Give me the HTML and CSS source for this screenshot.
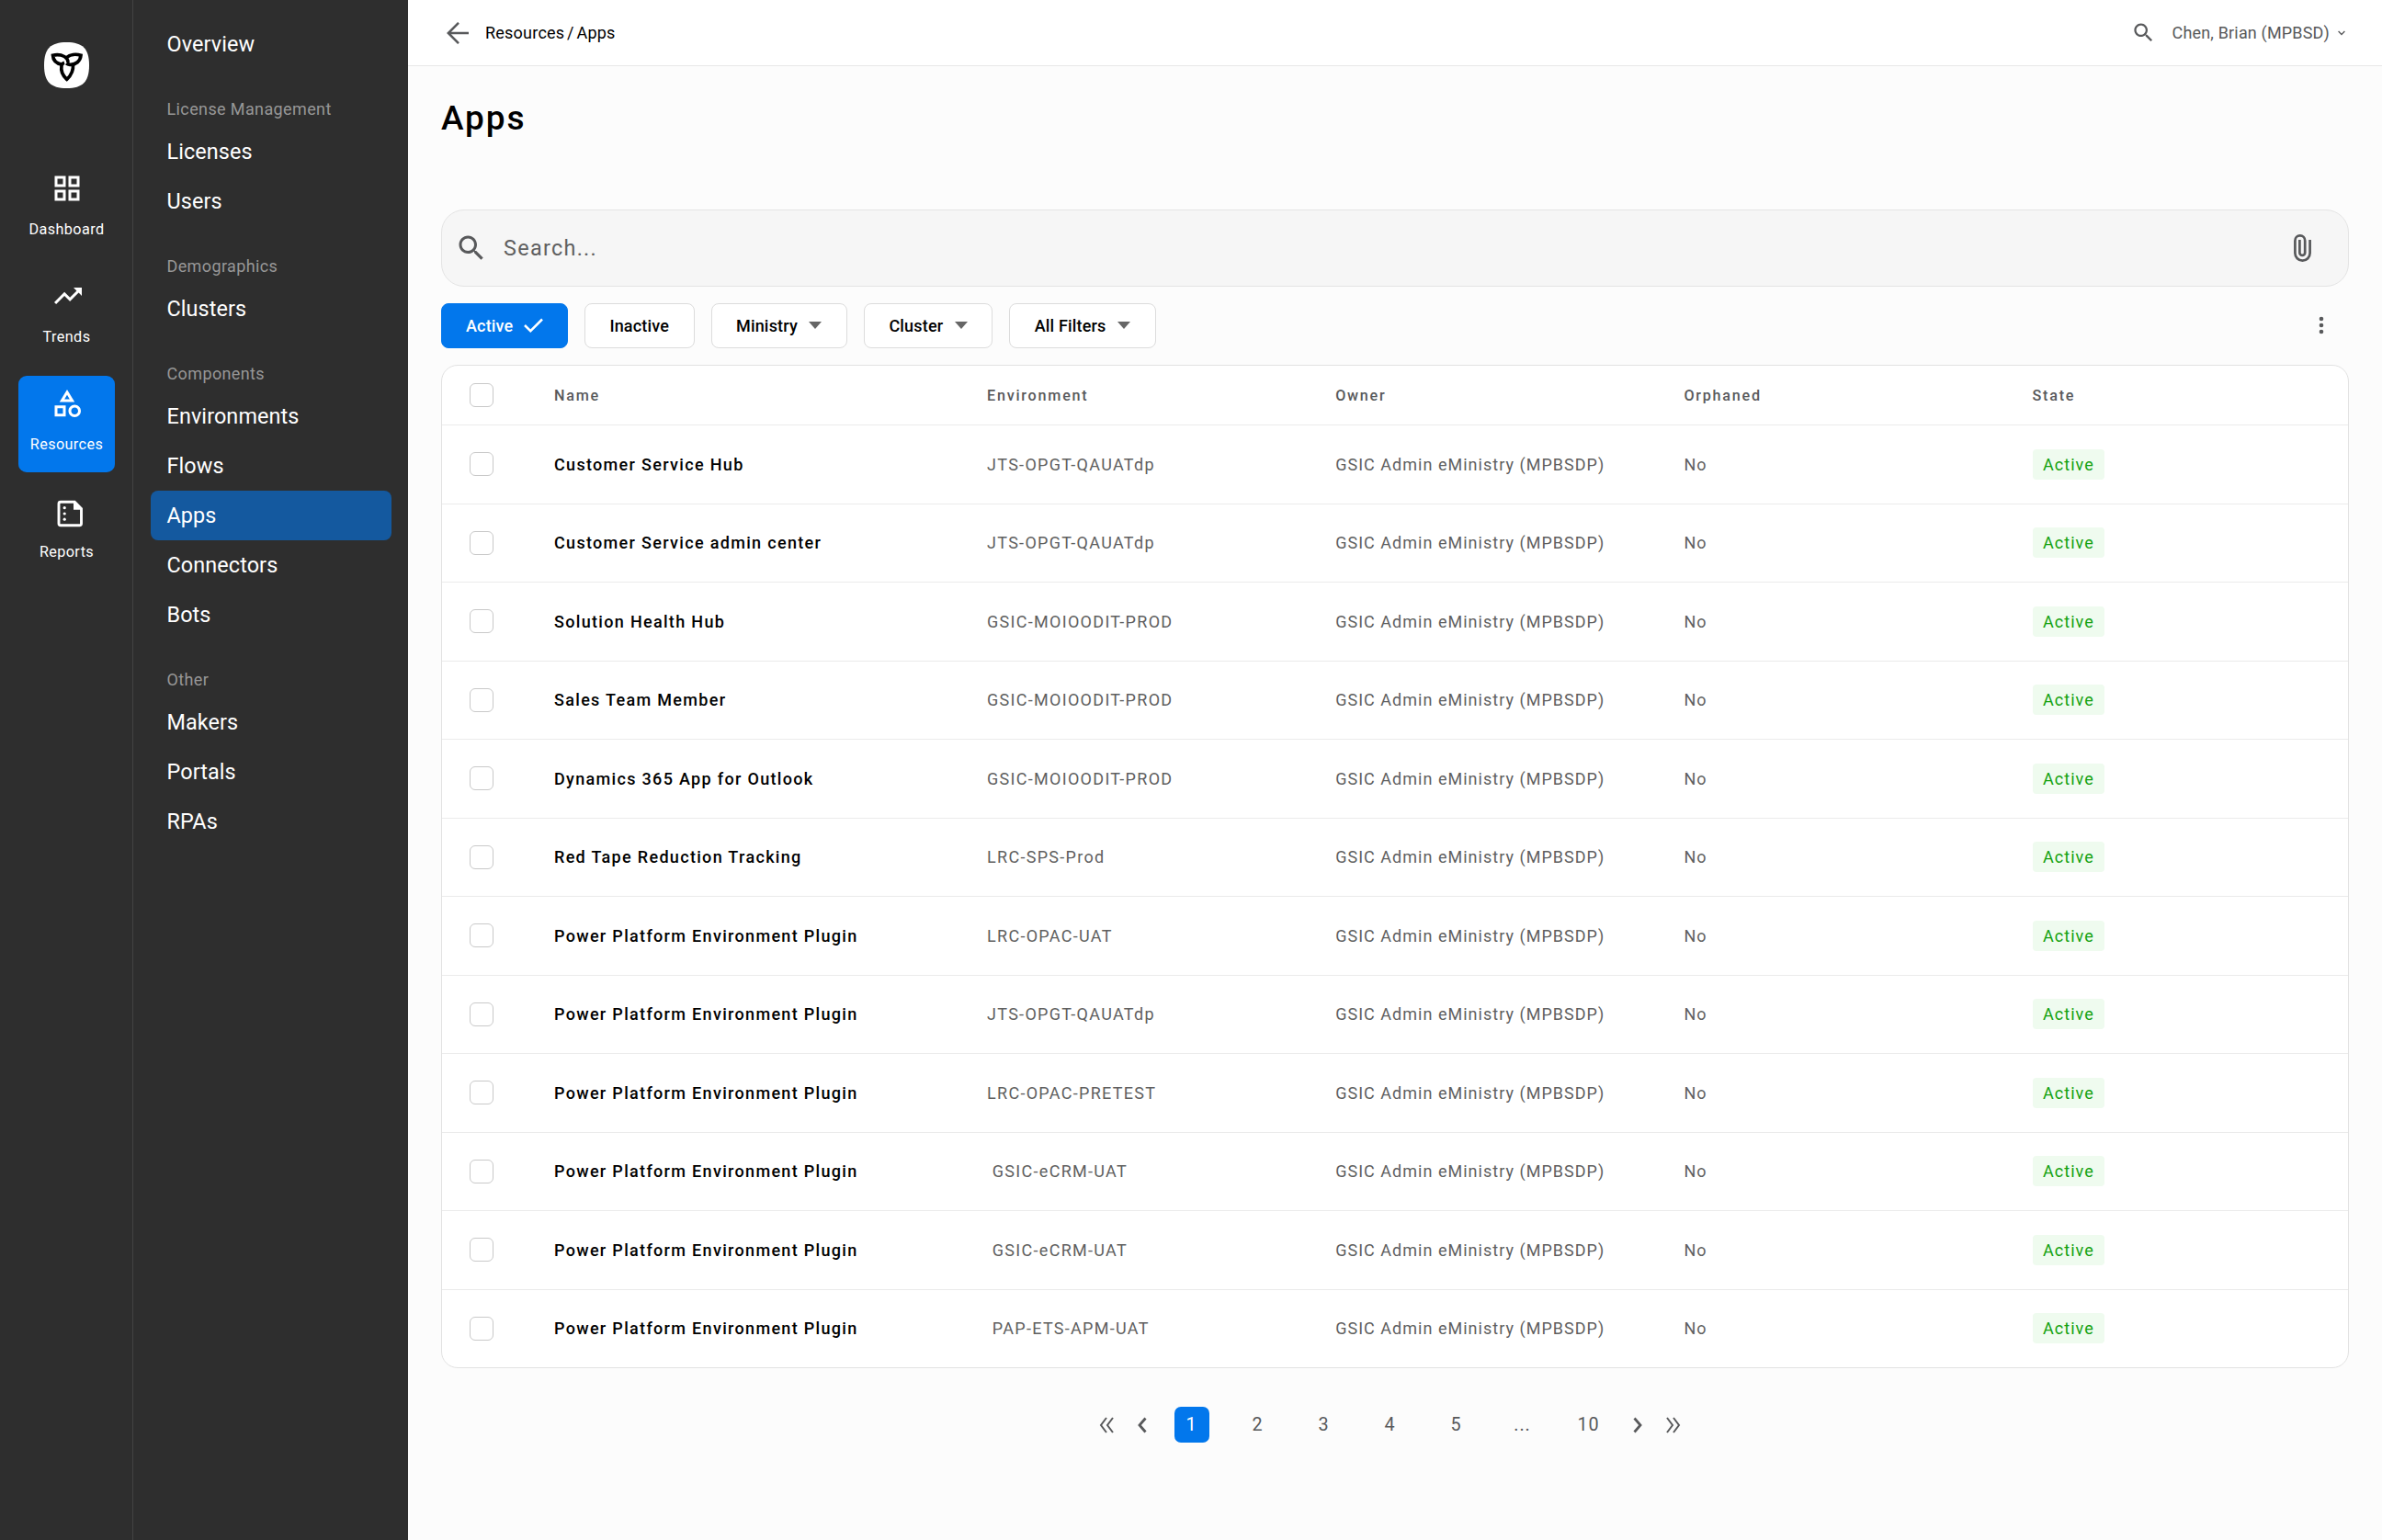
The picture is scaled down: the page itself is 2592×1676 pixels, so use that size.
FILE: index.html
```html
<!DOCTYPE html>
<html lang="en">
<head>
  <meta charset="UTF-8" />
  <title>Resources - Apps</title>
  <link rel="stylesheet" href="styles.css">
</head>
<body>

  <div class="layout">

    <!-- Main menu -->
    <aside class="rail">
      <svg class="logo" viewBox="0 0 49 50">
        <path d="M24.500 0C42 0 49 7 49 25S42 50 24.500 50 0 43 0 25 7 0 24.500 0z" fill="#fff"/>
        <g fill="none" stroke="#000" stroke-width="3.700">
          <path d="M19.500 24.300C13.500 23.300 9.800 19.500 9.500 14.200 15.500 12.600 22 14 25 18.300q1.600 2.400 .8 4.400"/>
          <path d="M24.500 16.500C28 13.300 34.500 12.600 40 14.200 39.500 20.500 34.500 24.700 28 24.300q-2.600-.2-3.800-1.300"/>
          <path d="M31.500 24C32 31 29 36.500 24.700 40.300 20.500 36.500 18 31 19 25.300q.6-2.300 3-3"/>
        </g>
      </svg>

      <a class="rail-item">
        <svg class="rail-icon" viewBox="0 0 24 24"><path d="M3 3v8h8V3H3zm6 6H5V5h4v4zm-6 4v8h8v-8H3zm6 6H5v-4h4v4zm4-16v8h8V3h-8zm6 6h-4V5h4v4zm-6 4v8h8v-8h-8zm6 6h-4v-4h4v4z"/></svg>
        <span>Dashboard</span>
      </a>
      <a class="rail-item">
        <svg class="rail-icon trends" viewBox="0 0 24 24"><path d="M16 6l2.290 2.290-4.880 4.880-4-4L2 16.590 3.410 18l6-6 4 4 6.300-6.290L22 12V6z"/></svg>
        <span>Trends</span>
      </a>
      <a class="rail-item active">
        <svg class="rail-icon" viewBox="0 0 24 24"><path d="M12 2l-5.500 9h11L12 2zm0 3.840L13.930 9h-3.870L12 5.840zM17.500 13c-2.490 0-4.500 2.010-4.500 4.500s2.010 4.500 4.500 4.500 4.500-2.010 4.500-4.500-2.010-4.500-4.500-4.500zm0 7c-1.380 0-2.500-1.120-2.500-2.500s1.120-2.500 2.500-2.500 2.500 1.120 2.500 2.500-1.120 2.500-2.500 2.500zM3 21.500h8v-8H3v8zm2-6h4v4H5v-4z"/></svg>
        <span>Resources</span>
      </a>
      <a class="rail-item">
        <svg class="rail-icon" viewBox="0 0 36 36">
          <path d="M11 8.300h15.200l7.300 7.200v16.300a2 2 0 0 1-2 2H11a2 2 0 0 1-2-2V10.300a2 2 0 0 1 2-2z" fill="none" stroke="#fff" stroke-width="2.900"/>
          <path d="M25 8v8.800h9V15l-7-7z"/>
          <circle cx="15.200" cy="14.700" r="1.600"/><circle cx="15.200" cy="21" r="1.600"/><circle cx="15.200" cy="27.200" r="1.600"/>
        </svg>
        <span>Reports</span>
      </a>
    </aside>

    <!-- Resources submenu -->
    <nav class="subnav">
      <a>Overview</a>
      <h4>License Management</h4>
      <a>Licenses</a>
      <a>Users</a>
      <h4>Demographics</h4>
      <a>Clusters</a>
      <h4>Components</h4>
      <a>Environments</a>
      <a>Flows</a>
      <a class="active">Apps</a>
      <a>Connectors</a>
      <a>Bots</a>
      <h4>Other</h4>
      <a>Makers</a>
      <a>Portals</a>
      <a>RPAs</a>
    </nav>

    <div class="main">
      <header class="topbar">
        <svg class="back line" viewBox="0 0 24 24"><path d="M24 12H1.800M13 .8L1.800 12 13 23.200"/></svg>
        <span class="breadcrumb">Resources / Apps</span>
        <svg class="top-search" viewBox="0 0 24 24"><path d="M15.500 14h-.79l-.28-.27C15.410 12.590 16 11.110 16 9.500 16 5.910 13.090 3 9.500 3S3 5.910 3 9.500 5.910 16 9.500 16c1.610 0 3.090-.59 4.230-1.570l.27.28v.79l5 4.990L20.490 19l-4.990-5zm-6 0C7.010 14 5 11.990 5 9.500S7.010 5 9.500 5 14 7.010 14 9.500 11.990 14 9.500 14z"/></svg>
        <span class="user">Chen, Brian (MPBSD)</span>
        <svg class="chevron line" viewBox="0 0 8 6"><path d="M.6 1L4 4.500 7.400 1"/></svg>
      </header>

      <div class="content">
        <h1>Apps</h1>

        <div class="search">
          <svg class="search-icon" viewBox="0 0 24 24"><path d="M15.500 14h-.79l-.28-.27C15.410 12.590 16 11.110 16 9.500 16 5.910 13.090 3 9.500 3S3 5.910 3 9.500 5.910 16 9.500 16c1.610 0 3.090-.59 4.230-1.570l.27.28v.79l5 4.990L20.490 19l-4.990-5zm-6 0C7.010 14 5 11.990 5 9.500S7.010 5 9.500 5 14 7.010 14 9.500 11.990 14 9.500 14z"/></svg>
          <span>Search...</span>
          <svg class="clip line" viewBox="0 0 19 30"><path d="M17.600 6v14.400a8.100 8.200 0 0 1-16.200 0V6.900a5.400 5.500 0 0 1 10.800 0v13a2.900 2.900 0 0 1-5.800 0V6"/></svg>
        </div>

        <div class="filters">
          <button class="chip active">Active
            <svg class="check line" viewBox="0 0 21 16"><path d="M1 8l6.300 6.200L20 1.500"/></svg>
          </button>
          <button class="chip">Inactive</button>
          <button class="chip">Ministry <i class="caret"></i></button>
          <button class="chip">Cluster <i class="caret"></i></button>
          <button class="chip">All Filters <i class="caret"></i></button>
          <svg class="more" viewBox="0 0 6 20"><circle cx="3" cy="3" r="2.300"/><circle cx="3" cy="10" r="2.300"/><circle cx="3" cy="17" r="2.300"/></svg>
        </div>

        <div class="card">
          <table>
            <thead>
              <tr>
                <th class="col-check"><span class="box"></span></th>
                <th class="col-name">Name</th>
                <th class="col">Environment</th>
                <th class="col">Owner</th>
                <th class="col">Orphaned</th>
                <th>State</th>
              </tr>
            </thead>
            <tbody id="appsTable"></tbody>
          </table>
        </div>

        <div class="pagination">
          <svg class="arrow line double" viewBox="0 0 16 18"><path d="M8 1L2 9l6 8M15 1L9 9l6 8"/></svg>
          <svg class="arrow line" viewBox="0 0 10 18"><path d="M8.500 1.500L2 9l6.500 7.500"/></svg>
          <div class="pages">
            <a class="active">1</a>
            <a>2</a>
            <a>3</a>
            <a>4</a>
            <a>5</a>
            <a>...</a>
            <a>10</a>
          </div>
          <svg class="arrow line" viewBox="0 0 10 18"><path d="M1.500 1.500L8 9l-6.500 7.500"/></svg>
          <svg class="arrow line double" viewBox="0 0 16 18"><path d="M1 1l6 8-6 8M8 1l6 8-6 8"/></svg>
        </div>
      </div>
    </div>
  </div>

  <script>
    const owner = "GSIC Admin eMinistry (MPBSDP)";
    const apps = [
      ["Customer Service Hub", "JTS-OPGT-QAUATdp"],
      ["Customer Service admin center", "JTS-OPGT-QAUATdp"],
      ["Solution Health Hub", "GSIC-MOIOODIT-PROD"],
      ["Sales Team Member", "GSIC-MOIOODIT-PROD"],
      ["Dynamics 365 App for Outlook", "GSIC-MOIOODIT-PROD"],
      ["Red Tape Reduction Tracking", "LRC-SPS-Prod"],
      ["Power Platform Environment Plugin", "LRC-OPAC-UAT"],
      ["Power Platform Environment Plugin", "JTS-OPGT-QAUATdp"],
      ["Power Platform Environment Plugin", "LRC-OPAC-PRETEST"],
      ["Power Platform Environment Plugin", "&nbsp;GSIC-eCRM-UAT"],
      ["Power Platform Environment Plugin", "&nbsp;GSIC-eCRM-UAT"],
      ["Power Platform Environment Plugin", "&nbsp;PAP-ETS-APM-UAT"]
    ];

    const tbody = document.getElementById("appsTable");
    apps.forEach(([name, env]) => {
      const row = document.createElement("tr");
      row.innerHTML = `
        <td><span class="box"></span></td>
        <td class="name">${name}</td>
        <td class="env">${env}</td>
        <td>${owner}</td>
        <td>No</td>
        <td><span class="badge">Active</span></td>
      `;
      tbody.appendChild(row);
    });
  </script>

</body>
</html>
```

FILE: styles.css
```css
* {
  box-sizing: border-box;
}

body {
  margin: 0;
  font-family: Roboto, "Liberation Sans", sans-serif;
  background: #fcfcfc;
  color: #000;
}

svg {
  display: block;
  flex: none;
  fill: #58595b;
}

svg.line {
  fill: none;
  stroke: #58595b;
}

.layout {
  display: flex;
  min-height: 1676px;
}

/* Left rail */
.rail {
  width: 145px;
  flex: none;
  padding: 46px 0 0 20px;
  background: #2e2e2e;
  border-right: 1px solid #434343;
}

.logo {
  width: 49px;
  height: 50px;
  margin: 0 0 79px 28px;
}

.rail-item {
  display: flex;
  flex-direction: column;
  align-items: center;
  width: 105px;
  height: 105px;
  margin-bottom: 12px;
  padding-top: 12px;
  border-radius: 9px;
  color: #fff;
  font-size: 16.200px;
  line-height: 20px;
  letter-spacing: 0.400px;
}

.rail-item.active {
  background: #0277ec;
}

.rail-icon {
  width: 36px;
  height: 36px;
  margin-bottom: 17px;
  fill: #fff;
}

.rail-icon.trends {
  margin-left: 3px;
}

/* Submenu */
.subnav {
  width: 299px;
  flex: none;
  padding: 21px 18px 0 18.500px;
  background: #2e2e2e;
}

.subnav a {
  display: block;
  height: 54px;
  padding-left: 18px;
  border-radius: 8px;
  color: #fff;
  font-size: 23.400px;
  line-height: 54px;
  letter-spacing: 0.100px;
}

.subnav a.active {
  background: #14599f;
}

.subnav h4 {
  margin: 25px 0 0 18px;
  height: 38px;
  color: #979797;
  font-size: 18px;
  font-weight: 400;
  line-height: 37px;
  letter-spacing: 0.380px;
}

/* Top bar */
.main {
  flex: 1;
}

.topbar {
  display: flex;
  align-items: center;
  height: 72px;
  padding: 0 40px 0 42px;
  background: #fff;
  border-bottom: 1px solid #e8e8e8;
  font-size: 18px;
}

.back {
  width: 24px;
  height: 24px;
  margin-right: 18px;
  stroke-width: 2.500;
}

.breadcrumb {
  letter-spacing: 0.230px;
  word-spacing: -2px;
}

.top-search {
  width: 27px;
  height: 27px;
  margin: 0 18px 0 auto;
}

.user {
  color: #58595b;
  letter-spacing: 0.170px;
}

.chevron {
  width: 8px;
  height: 6px;
  margin-left: 9px;
  stroke-width: 1.300;
}

.content {
  padding: 33px 36px 0;
}

h1 {
  margin: 0 0 75px;
  font-size: 37px;
  font-weight: 500;
  line-height: 48px;
  letter-spacing: 1.900px;
}

/* Search box */
.search {
  display: flex;
  align-items: center;
  height: 83.500px;
  padding: 0 40px 0 14px;
  background: #f6f6f6;
  border: 1px solid #e4e4e4;
  border-radius: 25px;
  color: #606060;
  font-size: 23.400px;
  letter-spacing: 1.300px;
}

.search-icon {
  width: 36px;
  height: 36px;
  margin-right: 17px;
}

.clip {
  width: 19px;
  height: 30px;
  margin-left: auto;
  stroke-width: 2.700;
}

/* Filter chips */
.filters {
  display: flex;
  align-items: center;
  gap: 18px;
  margin: 18px 0;
}

.chip {
  display: flex;
  align-items: center;
  height: 49.500px;
  padding: 0 26.500px;
  background: #fff;
  border: 1px solid #dcdcdc;
  border-radius: 8px;
  color: #000;
  font-family: inherit;
  font-size: 18px;
  font-weight: 500;
  letter-spacing: 0.170px;
}

.chip.active {
  padding: 0 26px;
  background: #0277ec;
  border-color: #0277ec;
  color: #fff;
}

.check {
  width: 21px;
  height: 16px;
  margin-left: 11.500px;
}

.check.line {
  stroke: #fff;
  stroke-width: 2.500;
}

.caret {
  margin-left: 12.500px;
  border: 7px solid transparent;
  border-top: 8px solid #666;
  border-bottom: 0;
}

.more {
  width: 6px;
  height: 20px;
  margin: 0 27px 0 auto;
}

/* Table */
.card {
  background: #fff;
  border: 1px solid #e2e2e2;
  border-radius: 18px;
  overflow: hidden;
}

table {
  width: 100%;
  table-layout: fixed;
  border-collapse: separate;
  border-spacing: 0;
}

th, td {
  padding: 0;
  text-align: left;
  vertical-align: middle;
}

th {
  height: 64px;
  color: #58595b;
  font-size: 16.200px;
  font-weight: 500;
  letter-spacing: 1.750px;
}

td {
  height: 85.500px;
  border-top: 1px solid #ebebeb;
  color: #5f5f5f;
  font-size: 18px;
  letter-spacing: 1.020px;
}

.col-check {
  width: 122px;
}

.col-name {
  width: 471px;
}

.col {
  width: 379.200px;
}

.name {
  color: #000;
  font-weight: 500;
  letter-spacing: 1.320px;
}

.env {
  letter-spacing: 1.300px;
}

.box {
  display: block;
  width: 26px;
  height: 26px;
  margin-left: 30px;
  border: 1.500px solid #c9c9c9;
  border-radius: 6px;
}

.badge {
  display: inline-block;
  padding: 0 11.500px 0 11.500px;
  background: #effbef;
  border-radius: 4px;
  color: #13a10e;
  line-height: 33px;
}

/* Pagination */
.pagination {
  display: flex;
  align-items: center;
  justify-content: center;
  margin: 42px 12px 0 0;
}

.pages {
  display: flex;
  gap: 34px;
  margin: 0 29px 0 30px;
}

.pages a {
  width: 38px;
  height: 39px;
  border-radius: 7px;
  color: #58595b;
  font-size: 19.800px;
  line-height: 40px;
  letter-spacing: 1px;
  text-align: center;
}

.pages a.active {
  background: #0277ec;
  color: #fff;
}

.arrow {
  width: 10px;
  height: 18px;
  stroke-width: 2.800;
}

.arrow.double {
  width: 16px;
  margin: 0 26px 0 0;
  stroke-width: 2;
}

.arrow + .double {
  margin: 0 0 0 26px;
}
```
